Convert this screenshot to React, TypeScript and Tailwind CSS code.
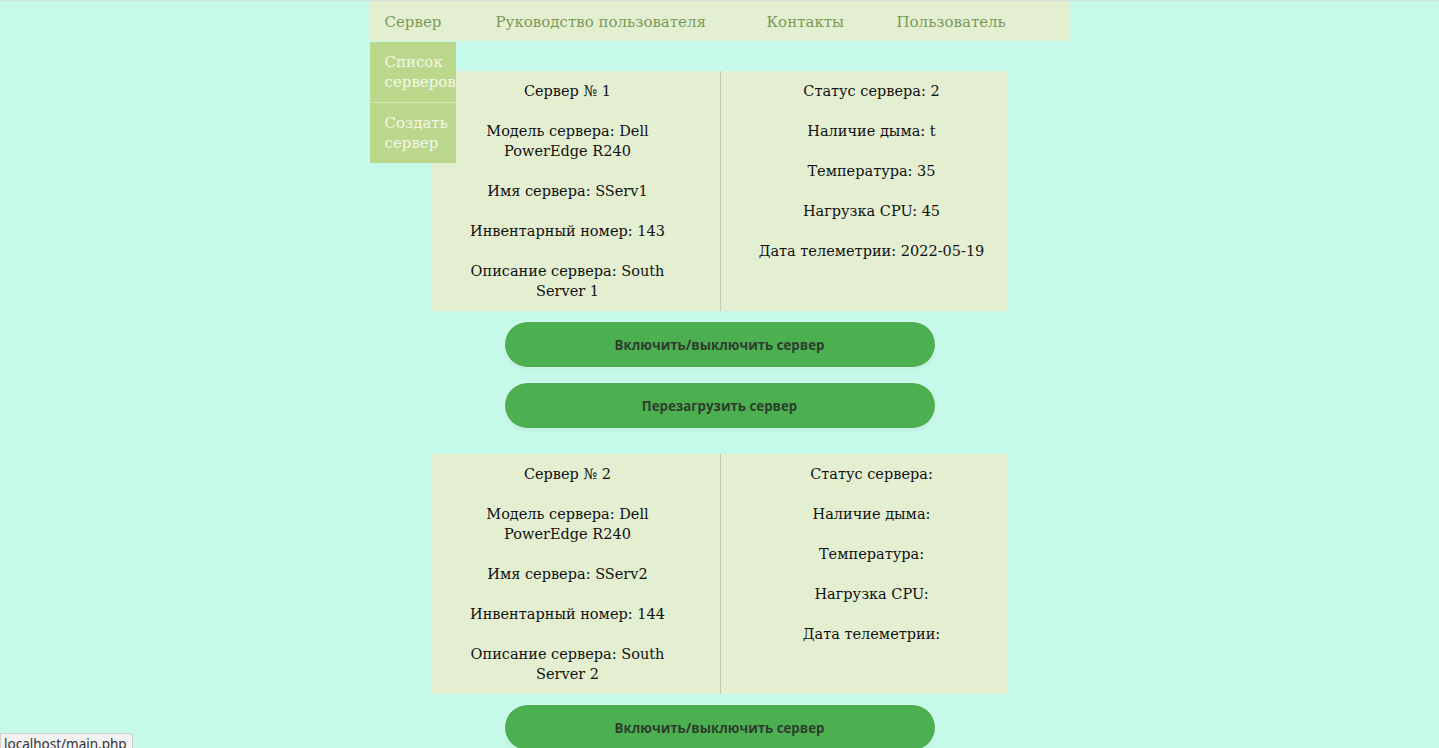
import React from 'react';

interface Server {
  id: number;
  model: string;
  name: string;
  inventory: number;
  description: string;
  status: string;
  smoke: string;
  temperature: string;
  cpu: string;
  telemetryDate: string;
}

const servers: Server[] = [
  {
    id: 1,
    model: 'Dell PowerEdge R240',
    name: 'SServ1',
    inventory: 143,
    description: 'South Server 1',
    status: '2',
    smoke: 't',
    temperature: '35',
    cpu: '45',
    telemetryDate: '2022-05-19',
  },
  {
    id: 2,
    model: 'Dell PowerEdge R240',
    name: 'SServ2',
    inventory: 144,
    description: 'South Server 2',
    status: '',
    smoke: '',
    temperature: '',
    cpu: '',
    telemetryDate: '',
  },
];

const serif = { fontFamily: '"DejaVu Serif", serif' };
const sans = { fontFamily: '"Open Sans", sans-serif' };

const ServerCard: React.FC<{ server: Server }> = ({ server }) => (
  <div className="flex flex-col items-center">
    <div className="flex w-[576px] bg-[#e4efd2] text-[14.5px] leading-[20px] text-[#111]" style={serif}>
      <div className="w-[288px] pl-[16px] pr-[32px] py-[10px] flex flex-col gap-[20px] text-center">
        <p>Сервер № {server.id}</p>
        <p>Модель сервера: Dell<br />PowerEdge R240</p>
        <p>Имя сервера: {server.name}</p>
        <p>Инвентарный номер: {server.inventory}</p>
        <p>Описание сервера: South<br />{server.description.replace('South ', '')}</p>
      </div>
      <div className="w-[288px] border-l border-[#c3cbb6] pl-[31px] pr-[16px] py-[10px] flex flex-col gap-[20px] text-center">
        <p>Статус сервера: {server.status}</p>
        <p>Наличие дыма: {server.smoke}</p>
        <p>Температура: {server.temperature}</p>
        <p>Нагрузка CPU: {server.cpu}</p>
        <p>Дата телеметрии: {server.telemetryDate}</p>
      </div>
    </div>
    <button className="mt-[11px] w-[430px] h-[45px] pt-[3px] rounded-full bg-[#4caf50] text-[#2e3d2e] text-[13.3px] font-bold shadow-[0_0_3px_rgba(255,255,255,0.9),0_2px_4px_rgba(0,0,0,0.08)]" style={sans}>
      Включить/выключить сервер
    </button>
    <button className="mt-[16px] w-[430px] h-[45px] pt-[3px] rounded-full bg-[#4caf50] text-[#2e3d2e] text-[13.3px] font-bold shadow-[0_0_3px_rgba(255,255,255,0.9),0_2px_4px_rgba(0,0,0,0.08)]" style={sans}>
      Перезагрузить сервер
    </button>
  </div>
);

export default function App() {
  return (
    <div className="min-h-screen bg-[#c5faea] border-t border-[#d9e2de]">
      {/* навигация */}
      <div className="relative w-[700px] mx-auto">
        <nav className="flex h-[40px] pt-[2px] items-center bg-[#e4efd2] text-[15px] text-[#7a9a58]" style={serif}>
          <div className="w-[111px] pl-[15px]">Сервер</div>
          <div className="w-[271px] pl-[15px]">Руководство пользователя</div>
          <div className="w-[130px] pl-[15px]">Контакты</div>
          <div className="pl-[15px]">Пользователь</div>
        </nav>
        <div className="absolute left-0 top-[41px] z-10 w-[86px] bg-[#bbd78b] text-[15px] leading-[20px] text-[#f3f8ea]" style={serif}>
          <div className="h-[60px] pl-[15px] pt-[10px] whitespace-nowrap">Список<br />серверов</div>
          <div className="h-px bg-[#d2e6b2]" />
          <div className="h-[60px] pl-[15px] pt-[10px]">Создать<br />сервер</div>
        </div>
      </div>

      {/* список серверов */}
      <div className="pt-[30px] pb-[40px] flex flex-col gap-[26px]">
        {servers.map(s => (
          <ServerCard key={s.id} server={s} />
        ))}
      </div>

      <div className="fixed bottom-0 left-0 h-[15px] pl-[3px] pr-[5px] pt-[2px] overflow-hidden bg-[#f2f2f2] border border-b-0 border-[#d0d0d0] rounded-tr-[3px] text-[13.5px] leading-[16px] text-[#333]" style={{ fontFamily: '"Noto Sans", sans-serif' }}>
        localhost/main.php
      </div>
    </div>
  );
}
